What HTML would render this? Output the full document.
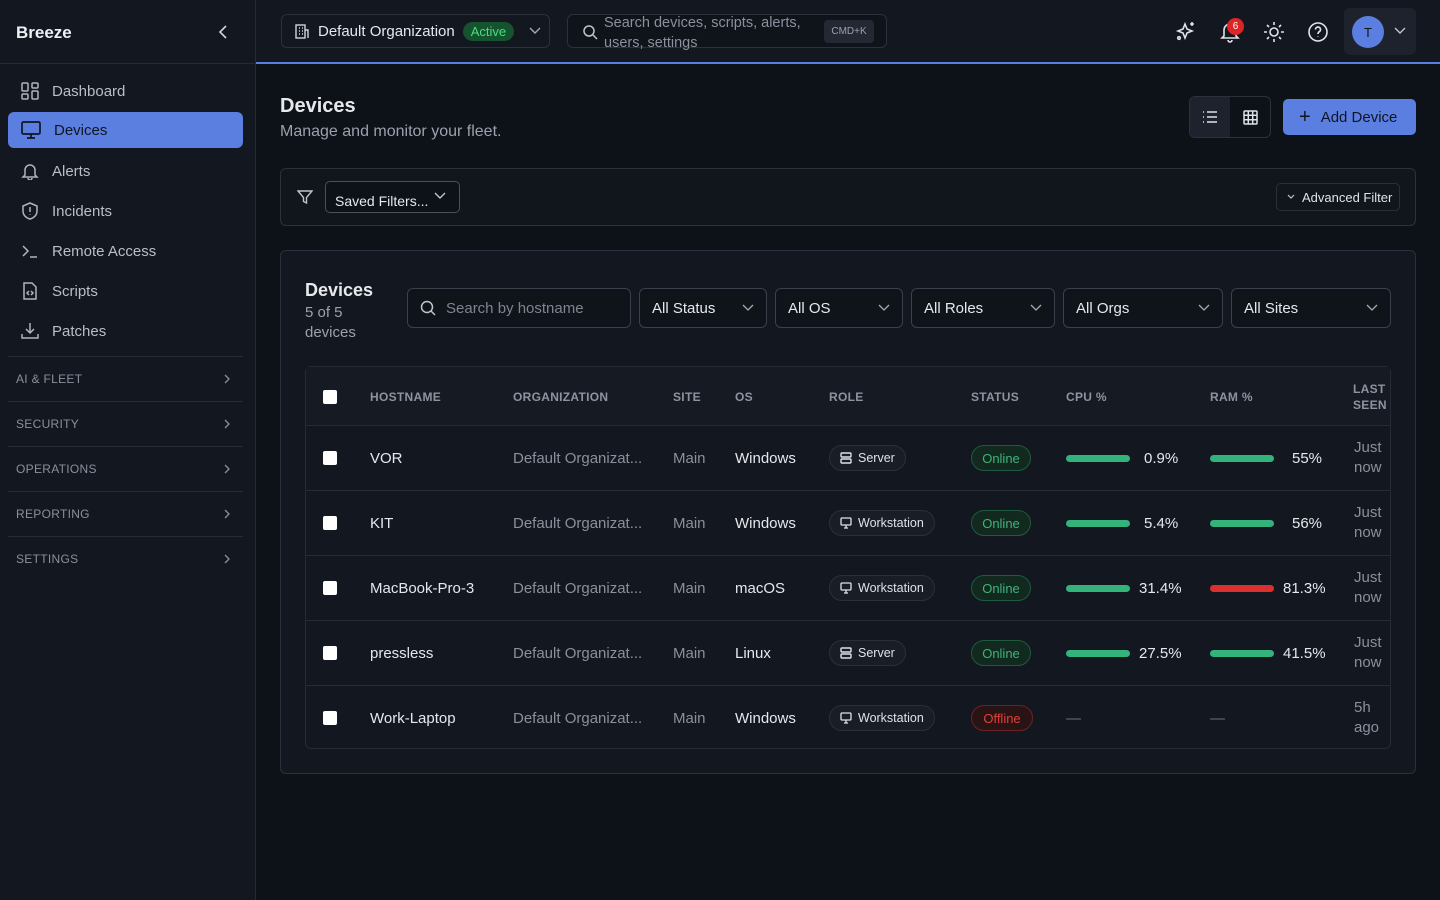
<!DOCTYPE html>
<html><head><meta charset="utf-8"><style>
*{box-sizing:border-box;margin:0;padding:0}
body{width:1440px;height:900px;background:#0d1118;font-family:"Liberation Sans",sans-serif;color:#e6e8ec;position:relative;overflow:hidden}
.a{position:absolute}
svg{display:block}
.side{left:0;top:0;width:256px;height:900px;background:#131720;border-right:1px solid #252a35}
.nav{left:8px;width:235px;height:36px;border-radius:6px;display:flex;align-items:center;padding-left:13px;font-size:15px;color:#b9bec8;gap:13px}
.sec{left:8px;width:235px;height:45px;border-top:1px solid #262b36;font-size:12px;color:#8a909c;letter-spacing:.3px;display:flex;align-items:center;justify-content:space-between;padding:0 12px 0 8px}
.hdr{left:256px;top:0;width:1184px;height:64px;background:#131720;border-bottom:2px solid #5b7fe0}
.box{border:1px solid #2c313c;border-radius:6px}
.sel{top:288px;height:40px;border:1px solid #3a404c;border-radius:6px;background:#0f131a;font-size:15px;color:#e6e8ec;display:flex;align-items:center;justify-content:space-between;padding:0 12px}
.th{top:390px;font-size:12px;font-weight:bold;color:#8d93a0;letter-spacing:.3px}
.row{left:306px;width:1084px;height:65px;border-top:1px solid #262b36}
.cell{position:absolute;top:0;height:64px;display:flex;align-items:center;font-size:15px}
.cb{width:14px;height:14px;background:#fff;border-radius:2px}
.role{height:26px;border:1px solid #2a2f3a;background:#191d26;border-radius:13px;font-size:12.5px;padding:0 10px;display:flex;align-items:center;gap:6px;color:#dfe2e8}
.on{height:26px;width:60px;border:1px solid #1f5a3e;background:#12291f;color:#3fb37a;border-radius:13px;font-size:13px;display:flex;align-items:center;justify-content:center}
.off{height:26px;width:62px;border:1px solid #6a2424;background:#2a1314;color:#e0403a;border-radius:13px;font-size:13px;display:flex;align-items:center;justify-content:center}
.bar{width:64px;height:7px;border-radius:4px;background:#34b27b}
</style></head><body>
<svg width="0" height="0" style="position:absolute"><defs>
<symbol id="srv" viewBox="0 0 12 12"><rect x="1" y="1" width="10" height="4" rx="1" fill="none" stroke="#dfe2e8" stroke-width="1.4"/><rect x="1" y="7" width="10" height="4" rx="1" fill="none" stroke="#dfe2e8" stroke-width="1.4"/></symbol>
<symbol id="ws" viewBox="0 0 12 12"><rect x="1" y="1" width="10" height="7" rx="1" fill="none" stroke="#dfe2e8" stroke-width="1.3"/><path d="M6 8v3M4 11h4" stroke="#dfe2e8" stroke-width="1.3"/></symbol>
<symbol id="chev" viewBox="0 0 8 12"><path d="M2 2l4 4-4 4" stroke="#8a909c" fill="none" stroke-width="1.3"/></symbol>
</defs></svg>
<div class="a side">
  <div class="a" style="left:16px;top:23px;font-size:17px;font-weight:bold;color:#eef0f3">Breeze</div>
  <svg class="a" style="left:216px;top:24px" width="14" height="16"><path d="M10 2L4 8l6 6" stroke="#d0d4da" stroke-width="1.6" fill="none"/></svg>
  <div class="a" style="left:0;top:63px;width:256px;border-top:1px solid #262b36"></div>
  <div class="a nav" style="top:73px"><svg width="18" height="18" fill="none" stroke="#b0b5bf" stroke-width="1.5"><rect x="1" y="1" width="6" height="8" rx="1"/><rect x="11" y="1" width="6" height="5" rx="1"/><rect x="11" y="9" width="6" height="8" rx="1"/><rect x="1" y="12" width="6" height="5" rx="1"/></svg>Dashboard</div>
  <div class="a nav" style="top:112px;background:#5b7fe0;color:#101522"><svg width="20" height="18" fill="none" stroke="#101522" stroke-width="1.7"><rect x="1" y="1" width="18" height="12" rx="1.5"/><path d="M10 13v4M6 17h8"/></svg>Devices</div>
  <div class="a nav" style="top:153px"><svg width="18" height="18" fill="none" stroke="#b0b5bf" stroke-width="1.5"><path d="M4 13V8a5 5 0 0110 0v5l2 2H2z M7 16a2 2 0 004 0"/></svg>Alerts</div>
  <div class="a nav" style="top:193px"><svg width="18" height="18" fill="none" stroke="#b0b5bf" stroke-width="1.5"><path d="M9 1l7 3v5c0 4-3 7-7 8-4-1-7-4-7-8V4z M9 5v5M9 12.5v.5"/></svg>Incidents</div>
  <div class="a nav" style="top:233px"><svg width="18" height="18" fill="none" stroke="#b0b5bf" stroke-width="1.5"><path d="M2 4l5 5-5 5M9 15h7"/></svg>Remote Access</div>
  <div class="a nav" style="top:273px"><svg width="18" height="18" fill="none" stroke="#b0b5bf" stroke-width="1.5"><path d="M3 1h8l4 4v12H3z M8 9l-2 2 2 2M10 9l2 2-2 2"/></svg>Scripts</div>
  <div class="a nav" style="top:313px"><svg width="18" height="18" fill="none" stroke="#b0b5bf" stroke-width="1.5"><path d="M9 1v10M5 7l4 4 4-4M1 12v4h16v-4"/></svg>Patches</div>
  <div class="a sec" style="top:356px">AI &amp; FLEET<svg width="8" height="12"><use href="#chev"/></svg></div>
  <div class="a sec" style="top:401px">SECURITY<svg width="8" height="12"><use href="#chev"/></svg></div>
  <div class="a sec" style="top:446px">OPERATIONS<svg width="8" height="12"><use href="#chev"/></svg></div>
  <div class="a sec" style="top:491px">REPORTING<svg width="8" height="12"><use href="#chev"/></svg></div>
  <div class="a sec" style="top:536px">SETTINGS<svg width="8" height="12"><use href="#chev"/></svg></div>
</div>
<div class="a hdr"></div>
<div class="a box" style="left:281px;top:14px;width:269px;height:34px;display:flex;align-items:center;padding-left:12px;gap:8px;font-size:15px">
  <svg width="16" height="16" fill="none" stroke="#d0d4da" stroke-width="1.4"><rect x="2" y="2" width="9" height="13"/><path d="M11 7h3v8M5 5h1M8 5h1M5 8h1M8 8h1M5 11h1M8 11h1"/></svg>
  <span>Default Organization</span>
  <span style="background:#14532d;color:#4ade80;font-size:13px;border-radius:10px;padding:2px 8px">Active</span>
  <svg width="14" height="10" style="margin-left:6px"><path d="M2 2l5 5 5-5" stroke="#aaa" fill="none" stroke-width="1.4"/></svg>
</div>
<div class="a box" style="left:567px;top:14px;width:320px;height:34px;background:#0f131a">
  <svg class="a" style="left:14px;top:9px" width="16" height="16" fill="none" stroke="#c0c4cc" stroke-width="1.5"><circle cx="7" cy="7" r="5"/><path d="M11 11l4 4"/></svg>
  <div class="a" style="left:36px;top:-2px;font-size:14.5px;color:#8a909c;line-height:20px">Search devices, scripts, alerts,<br>users, settings</div>
  <div class="a" style="left:256px;top:5px;width:50px;height:23px;background:#232833;border-radius:4px;font-size:10px;color:#9aa0ab;display:flex;align-items:center;justify-content:center">CMD+K</div>
</div>
<svg class="a" style="left:1175px;top:20px" width="22" height="22" fill="none" stroke="#e0e3e8" stroke-width="1.6"><path d="M10 4l2 5 5 2-5 2-2 5-2-5-5-2 5-2z M17 2v4M15 4h4"/><circle cx="4" cy="18" r="1.3"/></svg>
<svg class="a" style="left:1220px;top:21px" width="20" height="22" fill="none" stroke="#e0e3e8" stroke-width="1.6"><path d="M4 15V9a6 6 0 0112 0v6l2 2H2z M8 19a2 2 0 004 0"/></svg>
<div class="a" style="left:1227px;top:18px;width:17px;height:17px;border-radius:50%;background:#dc2626;color:#fff;font-size:10px;display:flex;align-items:center;justify-content:center">6</div>
<svg class="a" style="left:1263px;top:21px" width="22" height="22" fill="none" stroke="#e0e3e8" stroke-width="1.6"><circle cx="11" cy="11" r="4"/><path d="M11 1v3M11 18v3M1 11h3M18 11h3M4 4l2 2M16 16l2 2M4 18l2-2M16 6l2-2"/></svg>
<svg class="a" style="left:1307px;top:21px" width="22" height="22" fill="none" stroke="#e0e3e8" stroke-width="1.6"><circle cx="11" cy="11" r="9"/><path d="M8.5 8.5a2.5 2.5 0 114 2c-1 .7-1.5 1-1.5 2.5M11 15.5v.5"/></svg>
<div class="a" style="left:1344px;top:8px;width:72px;height:47px;background:#1d222c;border-radius:6px">
  <div class="a" style="left:8px;top:8px;width:32px;height:32px;border-radius:50%;background:#5b7fe0;color:#101522;font-size:13px;display:flex;align-items:center;justify-content:center">T</div>
  <svg class="a" style="left:50px;top:19px" width="12" height="8"><path d="M1 1l5 5 5-5" stroke="#c0c4cc" fill="none" stroke-width="1.4"/></svg>
</div>

<div class="a" style="left:280px;top:95px;font-size:20px;font-weight:bold">Devices</div>
<div class="a" style="left:280px;top:123px;font-size:16px;color:#9ba1ad">Manage and monitor your fleet.</div>
<div class="a box" style="left:1189px;top:96px;width:82px;height:42px;overflow:hidden">
  <div class="a" style="left:0;top:0;width:40px;height:42px;background:#1d222c"></div>
  <svg class="a" style="left:12px;top:13px" width="16" height="14" stroke="#e0e3e8" stroke-width="1.5"><path d="M5 2h10M5 7h10M5 12h10M1 2h1M1 7h1M1 12h1"/></svg>
  <svg class="a" style="left:53px;top:13px" width="16" height="16" fill="none" stroke="#e0e3e8" stroke-width="1.5"><rect x="1" y="1" width="13" height="13" rx="1"/><path d="M5.3 1v13M9.7 1v13M1 5.3h13M1 9.7h13"/></svg>
</div>
<div class="a" style="left:1283px;top:99px;width:133px;height:36px;background:#5b7fe0;border-radius:5px;color:#101522;font-size:15px;display:flex;align-items:center;padding-left:16px;gap:10px"><span style="font-size:20px;line-height:1">+</span>Add Device</div>

<div class="a box" style="left:280px;top:168px;width:1136px;height:58px;background:#11151c">
  <svg class="a" style="left:16px;top:20px" width="16" height="16" fill="none" stroke="#c0c4cc" stroke-width="1.4"><path d="M1 2h14l-5.5 6.5V14l-3-1.5V8.5z"/></svg>
  <div class="a" style="left:44px;top:12px;width:135px;height:32px;border:1px solid #4a505c;border-radius:5px;background:#0d1118;font-size:14px;padding:11px 0 0 9px;overflow:hidden;line-height:16px;color:#e6e8ec">Saved Filters...<svg class="a" style="left:108px;top:10px" width="12" height="8"><path d="M1 1l5 5 5-5" stroke="#c0c4cc" fill="none" stroke-width="1.4"/></svg></div>
  <div class="a" style="left:995px;top:14px;width:124px;height:28px;border:1px solid #2a2f3a;border-radius:5px;font-size:13px;display:flex;align-items:center;padding-left:10px;gap:7px;color:#dfe2e8"><svg width="8" height="6"><path d="M1 1l3 3 3-3" stroke="#c0c4cc" fill="none" stroke-width="1.2"/></svg>Advanced Filter</div>
</div>

<div class="a box" style="left:280px;top:250px;width:1136px;height:524px;background:#131720"></div>
<div class="a" style="left:305px;top:280px;font-size:18px;font-weight:bold">Devices</div>
<div class="a" style="left:305px;top:303px;font-size:15px;color:#9ba1ad;line-height:20px">5 of 5<br>devices</div>
<div class="a sel" style="left:407px;width:224px;justify-content:flex-start;gap:10px;color:#7e8591"><svg width="16" height="16" fill="none" stroke="#c0c4cc" stroke-width="1.5"><circle cx="7" cy="7" r="5.5"/><path d="M11 11l4 4"/></svg>Search by hostname</div>
<div class="a sel" style="left:639px;width:128px">All Status<svg width="12" height="8"><path d="M1 1l5 5 5-5" stroke="#aaa" fill="none" stroke-width="1.3"/></svg></div>
<div class="a sel" style="left:775px;width:128px">All OS<svg width="12" height="8"><path d="M1 1l5 5 5-5" stroke="#aaa" fill="none" stroke-width="1.3"/></svg></div>
<div class="a sel" style="left:911px;width:144px">All Roles<svg width="12" height="8"><path d="M1 1l5 5 5-5" stroke="#aaa" fill="none" stroke-width="1.3"/></svg></div>
<div class="a sel" style="left:1063px;width:160px">All Orgs<svg width="12" height="8"><path d="M1 1l5 5 5-5" stroke="#aaa" fill="none" stroke-width="1.3"/></svg></div>
<div class="a sel" style="left:1231px;width:160px">All Sites<svg width="12" height="8"><path d="M1 1l5 5 5-5" stroke="#aaa" fill="none" stroke-width="1.3"/></svg></div>

<div class="a" style="left:305px;top:366px;width:1086px;height:383px;border:1px solid #262b36;border-radius:6px;background:#131720"></div>
<div class="a" style="left:306px;top:367px;width:1084px;height:58px;background:#161a23"></div>
<div class="a cb" style="left:323px;top:390px"></div>
<div class="a th" style="left:370px">HOSTNAME</div>
<div class="a th" style="left:513px">ORGANIZATION</div>
<div class="a th" style="left:673px">SITE</div>
<div class="a th" style="left:735px">OS</div>
<div class="a th" style="left:829px">ROLE</div>
<div class="a th" style="left:971px">STATUS</div>
<div class="a th" style="left:1066px">CPU %</div>
<div class="a th" style="left:1210px">RAM %</div>
<div class="a th" style="left:1353px;top:381px;line-height:16px">LAST<br>SEEN</div>

<div class="a row" style="top:425px">
 <div class="cell" style="left:17px"><div class="cb"></div></div>
 <div class="cell" style="left:64px">VOR</div>
 <div class="cell" style="left:207px;color:#8a909c">Default Organizat...</div>
 <div class="cell" style="left:367px;color:#8a909c">Main</div>
 <div class="cell" style="left:429px">Windows</div>
 <div class="cell" style="left:523px"><div class="role"><svg width="12" height="12"><use href="#srv"/></svg>Server</div></div>
 <div class="cell" style="left:665px"><div class="on">Online</div></div>
 <div class="cell" style="left:760px;gap:14px"><div class="bar"></div>0.9%</div>
 <div class="cell" style="left:904px;gap:18px"><div class="bar"></div>55%</div>
 <div class="cell" style="left:1048px;color:#8a909c;line-height:20px">Just<br>now</div>
</div>
<div class="a row" style="top:490px">
 <div class="cell" style="left:17px"><div class="cb"></div></div>
 <div class="cell" style="left:64px">KIT</div>
 <div class="cell" style="left:207px;color:#8a909c">Default Organizat...</div>
 <div class="cell" style="left:367px;color:#8a909c">Main</div>
 <div class="cell" style="left:429px">Windows</div>
 <div class="cell" style="left:523px"><div class="role"><svg width="12" height="12"><use href="#ws"/></svg>Workstation</div></div>
 <div class="cell" style="left:665px"><div class="on">Online</div></div>
 <div class="cell" style="left:760px;gap:14px"><div class="bar"></div>5.4%</div>
 <div class="cell" style="left:904px;gap:18px"><div class="bar"></div>56%</div>
 <div class="cell" style="left:1048px;color:#8a909c;line-height:20px">Just<br>now</div>
</div>
<div class="a row" style="top:555px">
 <div class="cell" style="left:17px"><div class="cb"></div></div>
 <div class="cell" style="left:64px">MacBook-Pro-3</div>
 <div class="cell" style="left:207px;color:#8a909c">Default Organizat...</div>
 <div class="cell" style="left:367px;color:#8a909c">Main</div>
 <div class="cell" style="left:429px">macOS</div>
 <div class="cell" style="left:523px"><div class="role"><svg width="12" height="12"><use href="#ws"/></svg>Workstation</div></div>
 <div class="cell" style="left:665px"><div class="on">Online</div></div>
 <div class="cell" style="left:760px;gap:9px"><div class="bar"></div>31.4%</div>
 <div class="cell" style="left:904px;gap:9px"><div class="bar" style="background:#dc3030"></div>81.3%</div>
 <div class="cell" style="left:1048px;color:#8a909c;line-height:20px">Just<br>now</div>
</div>
<div class="a row" style="top:620px">
 <div class="cell" style="left:17px"><div class="cb"></div></div>
 <div class="cell" style="left:64px">pressless</div>
 <div class="cell" style="left:207px;color:#8a909c">Default Organizat...</div>
 <div class="cell" style="left:367px;color:#8a909c">Main</div>
 <div class="cell" style="left:429px">Linux</div>
 <div class="cell" style="left:523px"><div class="role"><svg width="12" height="12"><use href="#srv"/></svg>Server</div></div>
 <div class="cell" style="left:665px"><div class="on">Online</div></div>
 <div class="cell" style="left:760px;gap:9px"><div class="bar"></div>27.5%</div>
 <div class="cell" style="left:904px;gap:9px"><div class="bar"></div>41.5%</div>
 <div class="cell" style="left:1048px;color:#8a909c;line-height:20px">Just<br>now</div>
</div>
<div class="a row" style="top:685px">
 <div class="cell" style="left:17px"><div class="cb"></div></div>
 <div class="cell" style="left:64px">Work-Laptop</div>
 <div class="cell" style="left:207px;color:#8a909c">Default Organizat...</div>
 <div class="cell" style="left:367px;color:#8a909c">Main</div>
 <div class="cell" style="left:429px">Windows</div>
 <div class="cell" style="left:523px"><div class="role"><svg width="12" height="12"><use href="#ws"/></svg>Workstation</div></div>
 <div class="cell" style="left:665px"><div class="off">Offline</div></div>
 <div class="cell" style="left:760px;color:#6b717c">—</div>
 <div class="cell" style="left:904px;color:#6b717c">—</div>
 <div class="cell" style="left:1048px;color:#8a909c;line-height:20px">5h<br>ago</div>
</div>
</body></html>
